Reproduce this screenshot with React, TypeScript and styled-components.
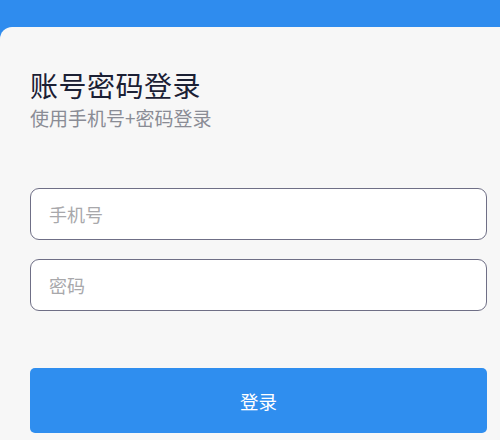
import React, {FunctionComponent, ReactElement} from "react";
import styled, {createGlobalStyle} from "styled-components";

const GlobalStyle = createGlobalStyle`
  html, body {
    margin: 0;
    padding: 0;
    background: #2f8cee;
  }

  body {
    font-family: "Noto Sans CJK SC", "Noto Sans", sans-serif;
  }

  * {
    box-sizing: border-box;
  }
`;

const Page = styled.div`
  width: 500px;
  height: 440px;
  padding-top: 27px;
  background: #2f8cee;
  overflow: hidden;
`;

const Card = styled.div`
  height: 100%;
  background: #f7f7f7;
  border-top-left-radius: 12px;
  padding: 40px 13px 0 30px;
  display: flex;
  flex-direction: column;
`;

const Title = styled.h1`
  margin: 0;
  font-size: 28px;
  line-height: 36px;
  font-weight: 400;
  color: #1b2034;
  letter-spacing: 0.5px;
`;

const Subtitle = styled.p`
  margin: 2px 0 0;
  font-size: 19px;
  line-height: 26px;
  color: #8a8c95;
`;

const Form = styled.form`
  margin-top: 57px;
  display: flex;
  flex-direction: column;
  gap: 19px;
`;

const Field = styled.input`
  width: 100%;
  height: 52px;
  padding: 0 18px;
  border: 1px solid #6f6f86;
  border-radius: 9px;
  background: #ffffff;
  font-family: inherit;
  font-size: 18px;
  color: #333;
  outline: none;

  &::placeholder {
    color: #a8a8ab;
  }
`;

const SubmitButton = styled.button`
  margin-top: 38px;
  width: 100%;
  height: 65px;
  border: none;
  border-radius: 5px;
  background: #2f8eef;
  color: #ffffff;
  font-family: inherit;
  font-size: 18.5px;
  cursor: pointer;
`;

const App: FunctionComponent = (): ReactElement => {
    return (
        <>
            <GlobalStyle/>
            <Page>
                <Card>
                    <Title>账号密码登录</Title>
                    <Subtitle>使用手机号+密码登录</Subtitle>

                    <Form onSubmit={e => e.preventDefault()}>
                        <Field type="tel" placeholder="手机号"/>
                        <Field type="password" placeholder="密码"/>
                        <SubmitButton type="submit">登录</SubmitButton>
                    </Form>
                </Card>
            </Page>
        </>
    )
}

export default App;
